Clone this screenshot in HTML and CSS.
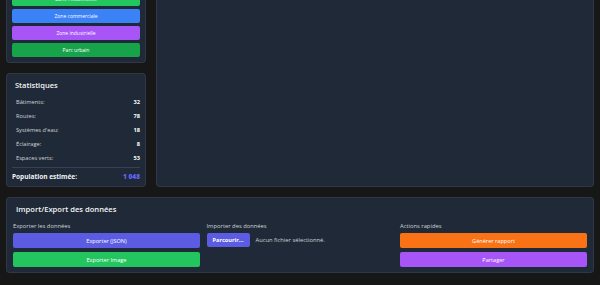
FILE: index.html
```html
<!DOCTYPE html>
<html lang="fr">
<head>
<meta charset="utf-8">
<title>Ville</title>
<link rel="stylesheet" href="styles.css">
</head>
<body>
<div class="page">
  <div class="top">
    <div class="side">
      <section class="panel tools">
        <h2 class="panel-title">Outils</h2>
        <div class="btn-stack">
          <button class="btn btn-green">Zone résidentielle</button>
          <button class="btn btn-blue">Zone commerciale</button>
          <button class="btn btn-purple">Zone industrielle</button>
          <button class="btn btn-dgreen">Parc urbain</button>
        </div>
      </section>
      <section class="panel stats">
        <h2 class="panel-title">Statistiques</h2>
        <ul class="stat-list">
          <li class="stat"><span>Bâtiments:</span><b>32</b></li>
          <li class="stat"><span>Routes:</span><b>78</b></li>
          <li class="stat"><span>Systèmes d'eau:</span><b>18</b></li>
          <li class="stat"><span>Éclairage:</span><b>8</b></li>
          <li class="stat"><span>Espaces verts:</span><b>53</b></li>
        </ul>
        <div class="population"><span>Population estimée:</span><b>1 048</b></div>
      </section>
    </div>
    <main class="panel canvas"></main>
  </div>
  <section class="panel io">
    <h2 class="panel-title io-title">Import/Export des données</h2>
    <div class="io-grid">
      <div class="io-col">
        <div class="io-label">Exporter les données</div>
        <button class="btn big btn-indigo">Exporter (JSON)</button>
        <button class="btn big btn-green">Exporter Image</button>
      </div>
      <div class="io-col">
        <div class="io-label">Importer des données</div>
        <div class="file-row">
          <span class="file-btn">Parcourir...</span>
          <span class="file-name">Aucun fichier sélectionné.</span>
        </div>
      </div>
      <div class="io-col">
        <div class="io-label">Actions rapides</div>
        <button class="btn big btn-orange">Générer rapport</button>
        <button class="btn big btn-purple">Partager</button>
      </div>
    </div>
  </section>
</div>
</body>
</html>
```

FILE: styles.css
```css
* { box-sizing: border-box; }
html, body { margin: 0; padding: 0; }
body {
  background: #171717;
  font-family: "Open Sans", "Noto Sans", sans-serif;
  color: #e5e7eb;
  padding: 0 6px 6px;
  overflow: hidden;
}
.page { margin-top: -35px; }
.top {
  display: grid;
  grid-template-columns: 140px 1fr;
  gap: 10px;
}
.side { display: flex; flex-direction: column; gap: 10px; }
.panel {
  background: #1f2937;
  border: 1px solid rgba(75, 85, 99, 0.35);
  border-radius: 4px;
}
.panel-title {
  margin: 0 0 0 3px;
  font-size: 7.5px;
  line-height: 12px;
  font-weight: 600;
  color: #f3f4f6;
}
.tools { padding: 6px 5px 5px; }
.tools .panel-title { margin-bottom: 8px; }
.btn-stack { display: flex; flex-direction: column; gap: 3px; }
.btn {
  display: block;
  width: 100%;
  border: 0;
  border-radius: 2px;
  color: #fff;
  font-family: inherit;
  font-size: 5px;
  height: 14px;
  padding: 0;
  text-align: center;
}
.btn.big { height: 15px; font-size: 5.6px; }
.btn-green { background: #22c55e; }
.btn-blue { background: #3b82f6; }
.btn-purple { background: #a855f7; }
.btn-dgreen { background: #16a34a; }
.btn-indigo { background: #5b5ce2; }
.btn-orange { background: #f97316; }

.stats { padding: 5px 5px 4px; }
.stats .panel-title { margin-bottom: 4px; }
.stat-list { list-style: none; margin: 0; padding: 0; }
.stat {
  display: flex;
  justify-content: space-between;
  align-items: center;
  height: 14px;
  padding-left: 4px;
  font-size: 5.7px;
  color: #d1d5db;
}
.stat b { color: #f9fafb; font-weight: 700; }
.population {
  margin-top: 2px;
  border-top: 1px solid #374151;
  padding-top: 3px;
  display: flex;
  justify-content: space-between;
  font-size: 6.5px;
  line-height: 11px;
  font-weight: 700;
  color: #f3f4f6;
}
.population b { color: #6366f1; }
.canvas { min-height: 100px; }

.io { margin-top: 10px; padding: 6px 6px 5px; }
.io-title { font-size: 7.6px; line-height: 10px; margin-bottom: 8px; }
.io-grid {
  display: grid;
  grid-template-columns: repeat(3, 1fr);
  gap: 6.5px;
}
.io-col { display: flex; flex-direction: column; gap: 4px; }
.io-label { font-size: 5.8px; line-height: 8px; color: #d1d5db; margin-bottom: -1px; }
.file-row { display: flex; align-items: center; gap: 6px; }
.file-btn {
  background: #5b5ce2;
  color: #fff;
  font-weight: 700;
  font-size: 5.6px;
  width: 43px;
  height: 14px;
  border-radius: 2px;
  display: flex;
  align-items: center;
  justify-content: center;
}
.file-name { font-size: 5.8px; color: #d1d5db; }
```
